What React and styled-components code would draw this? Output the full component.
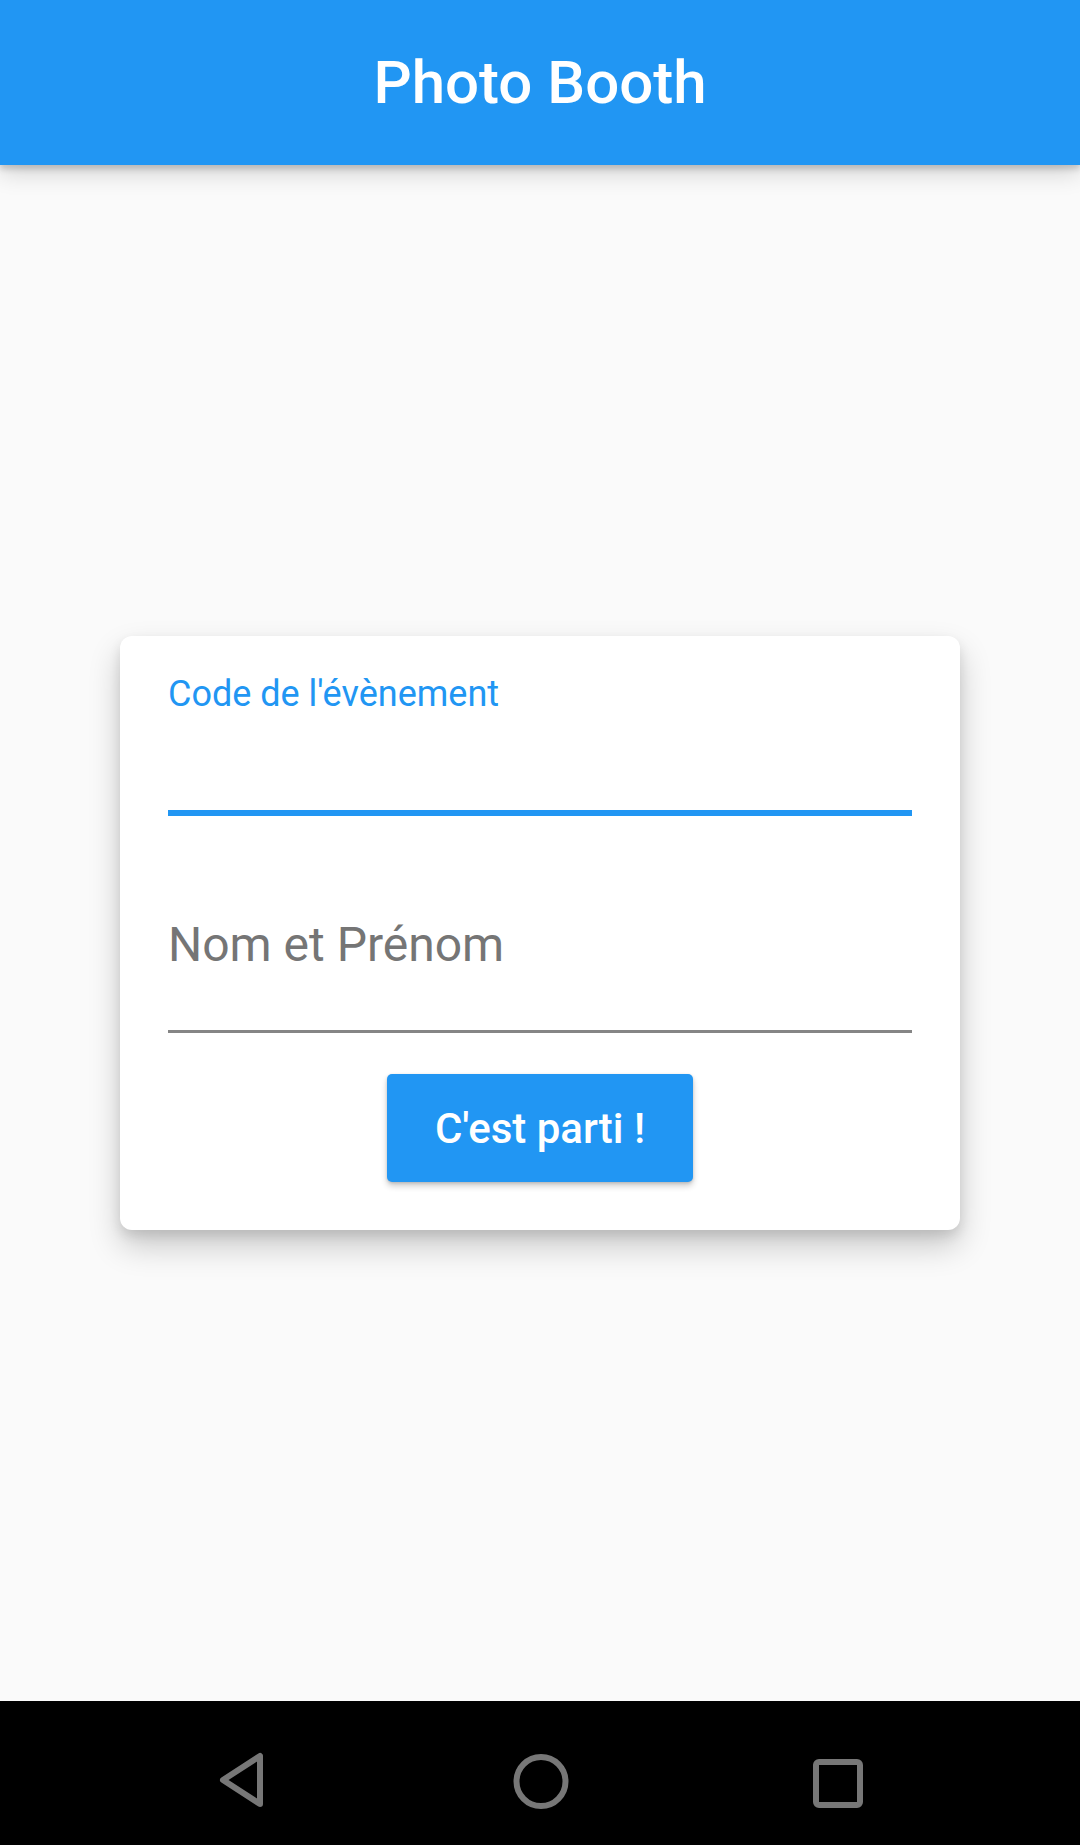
import React from "react";
import styled, { createGlobalStyle } from "styled-components";

const GlobalStyle = createGlobalStyle`
  html, body {
    margin: 0;
    padding: 0;
    background: #fafafa;
    font-family: Roboto, "Liberation Sans", sans-serif;
  }
`;

const Screen = styled.div`
  height: 100vh;
  display: flex;
  flex-direction: column;
  background: #fafafa;
`;

const AppBar = styled.header`
  position: relative;
  z-index: 2;
  height: 165px;
  flex-shrink: 0;
  background: #2196f3;
  box-shadow: 0 4px 6px rgba(0, 0, 0, 0.16), 0 8px 22px rgba(0, 0, 0, 0.16);
  display: flex;
  align-items: center;
  justify-content: center;
`;

const Title = styled.h1`
  margin: 0;
  color: #ffffff;
  font-size: 60px;
  font-weight: 500;
  line-height: 165px;
`;

const Body = styled.main`
  flex: 1;
  display: flex;
  align-items: center;
  justify-content: center;
`;

const Card = styled.form`
  width: 840px;
  box-sizing: border-box;
  padding: 40px 48px 48px;
  background: #ffffff;
  border-radius: 12px;
  box-shadow: 0 16px 32px rgba(0, 0, 0, 0.2), 0 6px 12px rgba(0, 0, 0, 0.1);
  display: flex;
  flex-direction: column;
`;

const Field = styled.div`
  display: flex;
  flex-direction: column;
  padding-top: ${({ $top }) => $top}px;
  padding-bottom: ${({ $bottom }) => $bottom}px;
  border-bottom: ${({ $focused }) => ($focused ? "6px solid #2196f3" : "3px solid #858585")};
`;

const Label = styled.label`
  color: #2196f3;
  font-size: 36px;
  line-height: 36px;
`;

const Input = styled.input`
  border: none;
  outline: none;
  padding: 0;
  margin: 0;
  background: transparent;
  font-family: Roboto, "Liberation Sans", sans-serif;
  font-size: 48px;
  line-height: 48px;
  height: ${({ $height }) => $height}px;
  color: #212121;

  &::placeholder {
    color: #757575;
  }
`;

const Actions = styled.div`
  display: flex;
  justify-content: center;
  margin-top: 41px;
`;

const Button = styled.button`
  height: 108px;
  padding: 0 48px;
  border: none;
  border-radius: 5px;
  background: #2196f3;
  color: #ffffff;
  font-family: Roboto, "Liberation Sans", sans-serif;
  font-size: 42px;
  font-weight: 500;
  box-shadow: 0 4px 6px rgba(0, 0, 0, 0.2), 0 1px 3px rgba(0, 0, 0, 0.14);
  cursor: pointer;
`;

const NavBar = styled.nav`
  height: 144px;
  flex-shrink: 0;
  box-sizing: border-box;
  padding-top: 16px;
  background: #000000;
  display: flex;
  align-items: center;
  justify-content: center;
  gap: 237px;
`;

const NavIcon = styled.svg`
  width: 60px;
  height: 60px;
  fill: none;
  stroke: #777777;
  stroke-width: 6;
  stroke-linejoin: round;
`;

export default function App() {
  return (
    <>
      <GlobalStyle />
      <Screen>
        <AppBar>
          <Title>Photo Booth</Title>
        </AppBar>
        <Body>
          <Card onSubmit={(e) => e.preventDefault()}>
            <Field $top={0} $bottom={0} $focused>
              <Label htmlFor="code">Code de l'évènement</Label>
              <Input id="code" $height={98} />
            </Field>
            <Field $top={104} $bottom={62}>
              <Input id="name" placeholder="Nom et Prénom" $height={48} />
            </Field>
            <Actions>
              <Button type="submit">C'est parti !</Button>
            </Actions>
          </Card>
        </Body>
        <NavBar>
          <NavIcon viewBox="0 0 60 60">
            <path d="M47 5 L47 53 L10 29 Z" />
          </NavIcon>
          <NavIcon viewBox="0 0 60 60">
            <circle cx="31" cy="30.5" r="24.5" />
          </NavIcon>
          <NavIcon viewBox="0 0 60 60">
            <rect x="9" y="11" width="44" height="43" rx="3" />
          </NavIcon>
        </NavBar>
      </Screen>
    </>
  );
}
